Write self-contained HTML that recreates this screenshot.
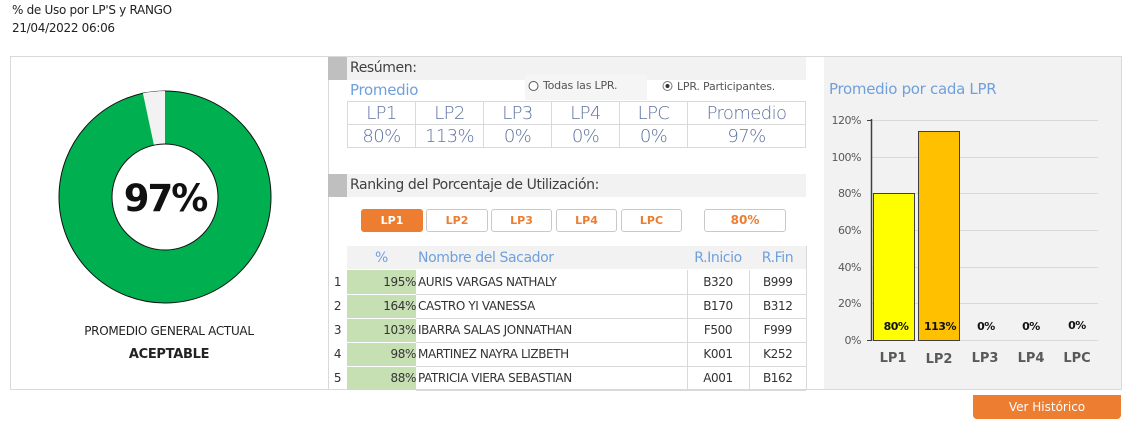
<!DOCTYPE html>
<html><head><meta charset="utf-8"><style>
*{margin:0;padding:0;box-sizing:border-box}
body{width:1131px;height:436px;background:#fff;font-family:"DejaVu Sans","Liberation Sans",sans-serif;position:relative;overflow:hidden;color:#222}
.a{position:absolute}
.t{font-size:12px;letter-spacing:-0.3px}
.bar{background:#f2f2f2;height:23px}
.sq{background:#bfbfbf;width:19px;height:23px}
.lbl{font-size:14px;color:#404040;letter-spacing:-0.4px}
table{border-collapse:collapse}
.sum td{border:1px solid #d9d9d9;text-align:center;color:#5f73a0;font-size:18px;height:23px;letter-spacing:-0.6px;font-weight:300}
.btn{position:absolute;top:209px;height:23px;border:1px solid #c9c9c9;border-radius:3px;color:#ed7d31;font-weight:bold;font-size:11px;text-align:center;line-height:21px;background:#fff}
.rk td{height:24px;border-bottom:1px solid #d9d9d9;font-size:12px;color:#333;letter-spacing:-0.4px}
.rk td.hd{color:#6fa0dc;font-size:14px;text-align:center}
</style></head><body>
<div class="a t" style="left:12px;top:3px">% de Uso por LP'S y RANGO</div>
<div class="a t" style="left:12px;top:21px">21/04/2022 06:06</div>
<div class="a" style="left:10px;top:56px;width:1112px;height:334px;border:1px solid #d9d9d9"></div>
<div class="a" style="left:328px;top:57px;width:1px;height:332px;background:#d9d9d9"></div>
<svg class="a" style="left:0;top:0" width="330" height="320">
<circle cx="165" cy="197" r="106" fill="#00b050" stroke="#111" stroke-width="1"/>
<path d="M165 197 L165 91 A106 106 0 0 0 142.9 93.3 Z" fill="#f2f2f2"/>
<circle cx="165" cy="197" r="53" fill="#fff" stroke="#111" stroke-width="1"/>
<text x="165" y="211" text-anchor="middle" font-family="DejaVu Sans, sans-serif" font-size="37" font-weight="bold" fill="#111" letter-spacing="-2">97%</text>
</svg>
<div class="a" style="left:10px;top:324px;width:318px;text-align:center;font-size:12px;letter-spacing:-0.3px">PROMEDIO GENERAL ACTUAL</div>
<div class="a" style="left:10px;top:347px;width:318px;text-align:center;font-size:13px;font-weight:bold;letter-spacing:-0.3px">ACEPTABLE</div>

<div class="a sq" style="left:328px;top:57px"></div>
<div class="a bar" style="left:347px;top:57px;width:459px"></div>
<div class="a lbl" style="left:350px;top:60px">Resúmen:</div>
<div class="a" style="left:350px;top:81px;font-size:15px;color:#6fa0dc;letter-spacing:-0.3px">Promedio</div>
<div class="a" style="left:525px;top:75px;width:122px;height:25px;background:#f5f5f5"></div>
<svg class="a" style="left:0;top:0" width="700" height="100"><circle cx="533.5" cy="86" r="4.5" fill="#fff" stroke="#555" stroke-width="1"/><circle cx="667.5" cy="86" r="4.5" fill="#fff" stroke="#777" stroke-width="1"/><circle cx="667.5" cy="86" r="2" fill="#333"/></svg>
<div class="a" style="left:543px;top:79px;font-size:11px;color:#555;letter-spacing:-0.2px">Todas las LPR.</div>
<div class="a" style="left:677px;top:80px;font-size:11px;color:#555;letter-spacing:-0.2px">LPR. Participantes.</div>
<table class="a sum" style="left:347px;top:101px;width:459px">
<tr><td style="width:68px">LP1</td><td style="width:68px">LP2</td><td style="width:68px">LP3</td><td style="width:68px">LP4</td><td style="width:68px">LPC</td><td>Promedio</td></tr>
<tr><td>80%</td><td>113%</td><td>0%</td><td>0%</td><td>0%</td><td>97%</td></tr>
</table>

<div class="a sq" style="left:328px;top:174px"></div>
<div class="a bar" style="left:347px;top:174px;width:459px"></div>
<div class="a lbl" style="left:350px;top:177px">Ranking del Porcentaje de Utilización:</div>
<div class="btn" style="left:361px;width:62px;background:#ed7d31;color:#fff;border-color:#ed7d31">LP1</div>
<div class="btn" style="left:426px;width:62px">LP2</div>
<div class="btn" style="left:491px;width:61px">LP3</div>
<div class="btn" style="left:556px;width:61px">LP4</div>
<div class="btn" style="left:621px;width:61px">LPC</div>
<div class="btn" style="left:704px;width:82px;font-size:12px">80%</div>

<div class="a" style="left:347px;top:246px;width:459px;height:23px;background:#f2f2f2"></div>
<table class="a rk" style="left:328px;top:246px;width:478px">
<tr><td style="width:19px;border:0"></td><td class="hd" style="width:69px;border:0">%</td><td class="hd" style="width:271px;border:0;text-align:left;padding-left:2px">Nombre del Sacador</td><td class="hd" style="width:62px;border:0">R.Inicio</td><td class="hd" style="border:0">R.Fin</td></tr>
<tr><td style="border:0;text-align:center">1</td><td style="background:#c6e0b4;text-align:right;border-bottom-color:#fff">195%</td><td style="padding-left:2px;border-right:1px solid #d9d9d9">AURIS VARGAS NATHALY</td><td style="text-align:center;border-right:1px solid #d9d9d9">B320</td><td style="text-align:center">B999</td></tr>
<tr><td style="border:0;text-align:center">2</td><td style="background:#c6e0b4;text-align:right;border-bottom-color:#fff">164%</td><td style="padding-left:2px;border-right:1px solid #d9d9d9">CASTRO YI VANESSA</td><td style="text-align:center;border-right:1px solid #d9d9d9">B170</td><td style="text-align:center">B312</td></tr>
<tr><td style="border:0;text-align:center">3</td><td style="background:#c6e0b4;text-align:right;border-bottom-color:#fff">103%</td><td style="padding-left:2px;border-right:1px solid #d9d9d9">IBARRA SALAS JONNATHAN</td><td style="text-align:center;border-right:1px solid #d9d9d9">F500</td><td style="text-align:center">F999</td></tr>
<tr><td style="border:0;text-align:center">4</td><td style="background:#c6e0b4;text-align:right;border-bottom-color:#fff">98%</td><td style="padding-left:2px;border-right:1px solid #d9d9d9">MARTINEZ NAYRA LIZBETH</td><td style="text-align:center;border-right:1px solid #d9d9d9">K001</td><td style="text-align:center">K252</td></tr>
<tr><td style="border:0;text-align:center">5</td><td style="background:#c6e0b4;text-align:right;border-bottom-color:#fff">88%</td><td style="padding-left:2px;border-right:1px solid #d9d9d9">PATRICIA VIERA SEBASTIAN</td><td style="text-align:center;border-right:1px solid #d9d9d9">A001</td><td style="text-align:center">B162</td></tr>
</table>
<div class="a" style="left:806px;top:246px;width:1px;height:143px;background:#d9d9d9"></div>

<div class="a" style="left:824px;top:57px;width:297px;height:332px;background:#f2f2f2"></div>
<div class="a" style="left:829px;top:80px;font-size:15px;color:#6fa0dc;letter-spacing:-0.3px">Promedio por cada LPR</div>
<svg class="a" style="left:820px;top:100px" width="300" height="280" font-family="DejaVu Sans, sans-serif">
<g stroke="#d9d9d9" stroke-width="1">
<line x1="51" y1="20.5" x2="278" y2="20.5"/><line x1="51" y1="57.5" x2="278" y2="57.5"/><line x1="51" y1="93.5" x2="278" y2="93.5"/><line x1="51" y1="130.5" x2="278" y2="130.5"/><line x1="51" y1="167.5" x2="278" y2="167.5"/><line x1="51" y1="203.5" x2="278" y2="203.5"/><line x1="51" y1="240.5" x2="278" y2="240.5"/></g>
<g font-size="11" fill="#595959" text-anchor="end" letter-spacing="-0.5">
<text x="41" y="24">120%</text><text x="41" y="61">100%</text><text x="41" y="97">80%</text><text x="41" y="134">60%</text><text x="41" y="171">40%</text><text x="41" y="207">20%</text><text x="41" y="244">0%</text></g>
<rect x="53.5" y="93.5" width="41" height="147" fill="#ffff00" stroke="#404040"/>
<rect x="98.5" y="31.5" width="41" height="209" fill="#ffc000" stroke="#404040"/>
<line x1="51.5" y1="19" x2="51.5" y2="241" stroke="#404040" stroke-width="1.5"/>
<line x1="47" y1="240.5" x2="52" y2="240.5" stroke="#404040"/>
<line x1="47" y1="20.5" x2="52" y2="20.5" stroke="#404040"/>
<g font-size="11" font-weight="bold" fill="#111" text-anchor="middle" letter-spacing="-0.5">
<text x="76" y="230">80%</text><text x="120" y="230">113%</text><text x="166" y="230">0%</text><text x="211" y="230">0%</text><text x="257" y="229">0%</text></g>
<g font-size="13" font-weight="bold" fill="#595959" text-anchor="middle">
<text x="73" y="262">LP1</text><text x="119" y="263">LP2</text><text x="165" y="262">LP3</text><text x="211" y="262">LP4</text><text x="257" y="262">LPC</text></g>
</svg>
<div class="a" style="left:973px;top:395px;width:148px;height:24px;background:#ed7d31;border-radius:0 0 4px 4px;color:#fff;font-size:12px;text-align:center;line-height:24px">Ver Histórico</div>
</body></html>
